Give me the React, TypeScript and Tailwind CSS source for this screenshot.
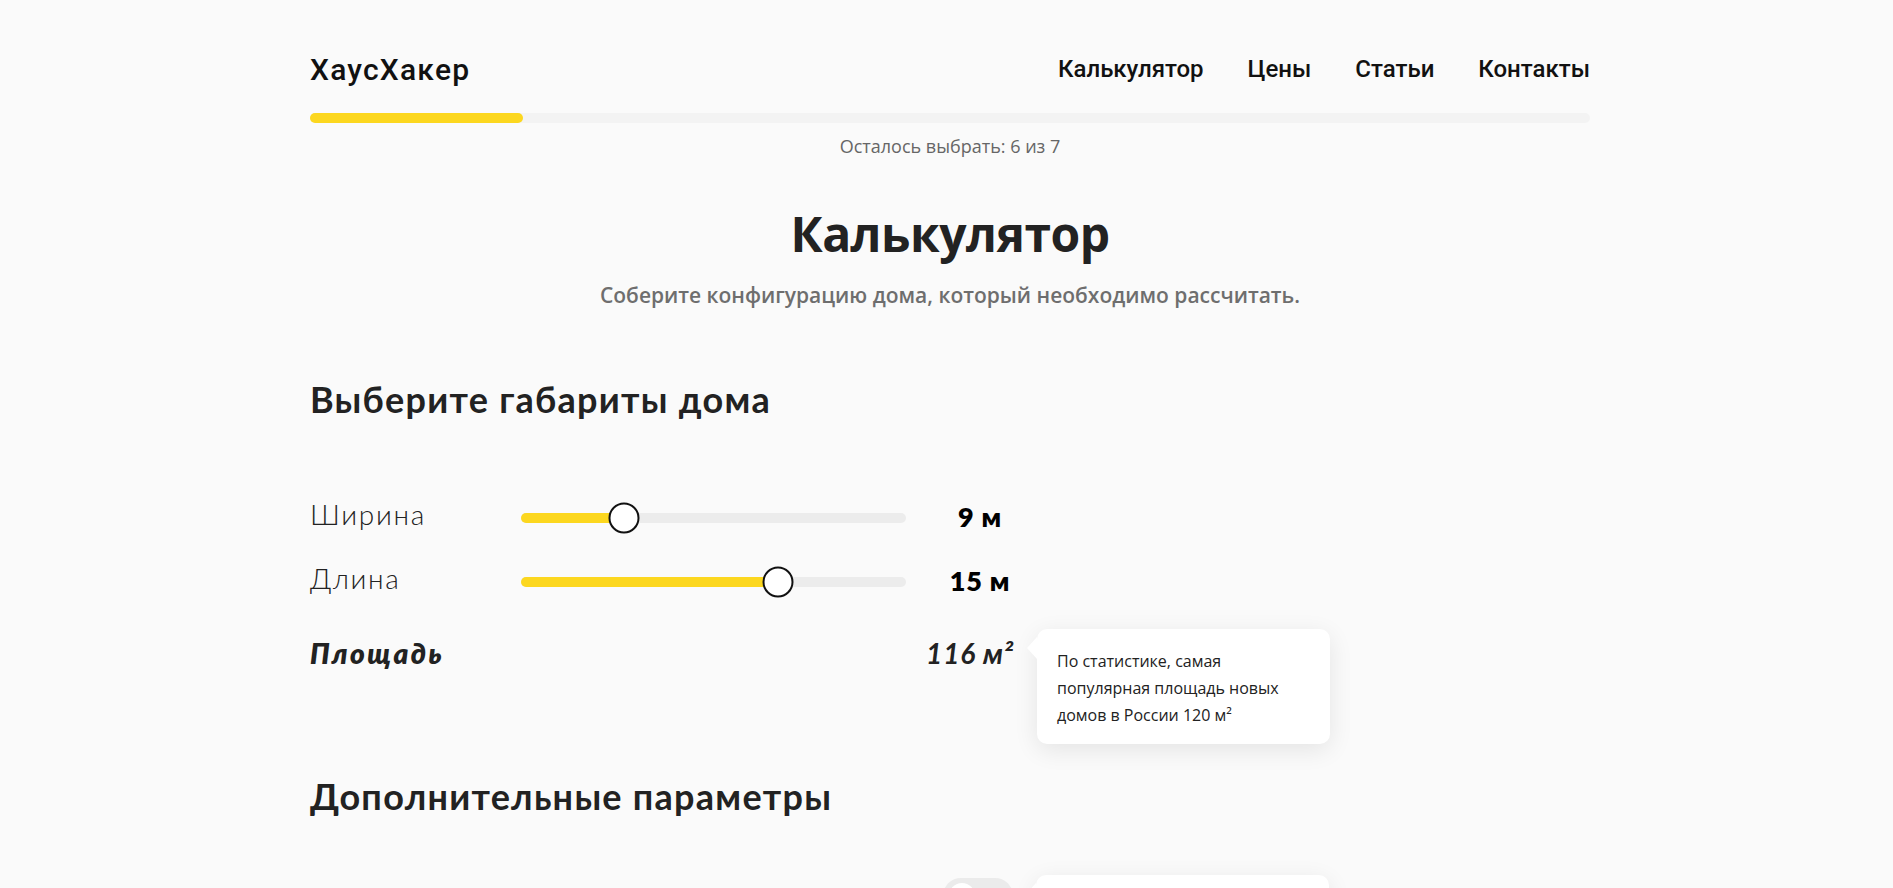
import React from 'react';

const navItems = ['Калькулятор', 'Цены', 'Статьи', 'Контакты'];

const MIN = 5;
const MAX = 20;

type SliderRowProps = { label: string; value: number };

const SliderRow: React.FC<SliderRowProps> = ({ label, value }) => {
  const pct = ((value - MIN) / (MAX - MIN)) * 100;
  return (
    <div className="grid h-[40px] grid-cols-[211px_385px_148px] items-center">
      <span className="pb-[7px] font-['Lato',sans-serif] text-[28px] font-light tracking-[0.06em] text-[#222]">
        {label}
      </span>
      <div className="relative h-[10px] rounded-full bg-[#ececec]">
        <div className="h-full rounded-full bg-[#fcd71f]" style={{ width: `${pct}%` }} />
        <div
          className="absolute top-1/2 h-[31px] w-[31px] -translate-x-1/2 -translate-y-1/2 rounded-full border-2 border-[#111] bg-white"
          style={{ left: `${pct}%` }}
        />
      </div>
      <span className="text-center font-['Lato',sans-serif] text-[27px] font-extrabold tracking-[0.03em] text-black">
        {value} м
      </span>
    </div>
  );
};

const Hint: React.FC<{ children?: React.ReactNode; className?: string }> = ({ children, className }) => {
  return (
    <div
      className={`absolute w-[293px] rounded-[10px] bg-white px-[20px] pb-[15px] pt-[19px] shadow-[0_6px_24px_rgba(0,0,0,0.09)] ${className ?? ''}`}
    >
      <span className="absolute -left-[10px] top-[8px] h-0 w-0 border-y-[11px] border-r-[10px] border-y-transparent border-r-white" />
      {children}
    </div>
  );
};

const App: React.FC = () => {
  return (
    <div className="h-screen overflow-hidden bg-[#fafafa] pl-[7px]">
      <div className="mx-auto w-[1280px] pt-[37px]">
        {/* Шапка */}
        <header className="flex h-[64px] items-center justify-between font-['Roboto',sans-serif] font-medium text-[#111]">
          <span className="text-[30px] tracking-[0.04em]">ХаусХакер</span>
          <nav className="flex gap-[44px] text-[24px]">
            {navItems.map((item) => (
              <a key={item} href="#">
                {item}
              </a>
            ))}
          </nav>
        </header>

        {/* Прогресс */}
        <div className="mt-[12px] h-[10px] rounded-full bg-[#f3f3f3]">
          <div className="h-full w-[213px] rounded-full bg-[#fcd71f]" />
        </div>
        <p className="mt-[11px] text-center font-['Open_Sans',sans-serif] text-[18px] leading-[24px] text-[#666]">
          Осталось выбрать: 6 из 7
        </p>

        <h1 className="mt-[48px] text-center font-['Open_Sans',sans-serif] text-[48px] font-bold leading-[56px] tracking-[-0.5px] text-[#222]">
          Калькулятор
        </h1>
        <p className="mt-[19px] text-center font-['Open_Sans',sans-serif] text-[21px] font-semibold leading-[28px] text-[#6e6e6e]">
          Соберите конфигурацию дома, который необходимо рассчитать.
        </p>

        {/* Габариты */}
        <h2 className="mt-[68px] font-['Lato',sans-serif] text-[36px] font-bold leading-[44px] tracking-[0.035em] text-[#222]">
          Выберите габариты дома
        </h2>
        <div className="mt-[72px]">
          <SliderRow label="Ширина" value={9} />
        </div>
        <div className="mt-[24px]">
          <SliderRow label="Длина" value={15} />
        </div>
        <div className="relative mt-[36px] flex h-[40px] w-[704px] items-center justify-between font-['Lato',sans-serif] text-[28px] italic text-[#222]">
          <span className="font-extrabold tracking-[0.09em]">Площадь</span>
          <span className="font-bold tracking-[0.03em]">116 м²</span>
          <Hint className="left-[727px] -top-[4px] not-italic">
            <p className="font-['Open_Sans',sans-serif] text-[16px] leading-[27px] tracking-normal text-[#222]">
              По статистике, самая
              <br />
              популярная площадь новых
              <br />
              домов в России 120 м²
            </p>
          </Hint>
        </div>

        {/* Дополнительно */}
        <h2 className="mt-[101px] font-['Lato',sans-serif] text-[36px] font-bold leading-[44px] tracking-[0.035em] text-[#222]">
          Дополнительные параметры
        </h2>
        <div className="relative mt-[57px] flex h-[80px] w-[704px] items-start justify-end">
          <div className="mr-[1px] mt-[3px] flex h-[36px] w-[70px] items-center rounded-full bg-[#ebebeb] px-[6px]">
            <span className="h-[26px] w-[26px] rounded-full bg-white" />
          </div>
          <Hint className="left-[726px] top-0 h-[120px]" />
        </div>
      </div>
    </div>
  );
};

export default App;
